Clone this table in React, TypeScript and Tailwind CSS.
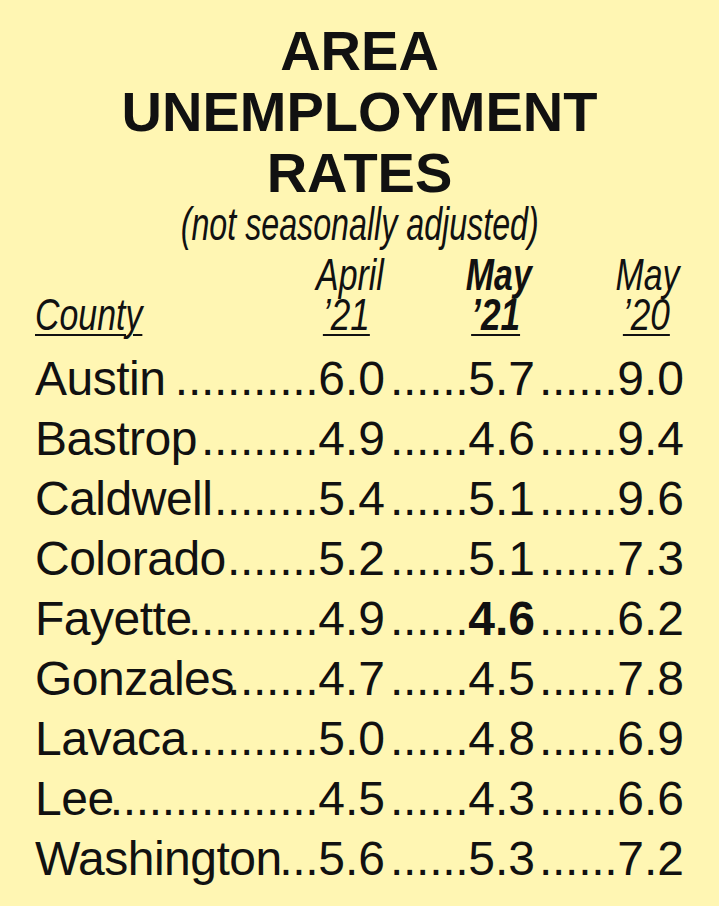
import React from 'react';

type Row = {
  county: string;
  dots: number;
  april21: string;
  may21: string;
  may20: string;
  boldMay21?: boolean;
};

const ROWS: Row[] = [
  { county: 'Austin', dots: 11, april21: '6.0', may21: '5.7', may20: '9.0' },
  { county: 'Bastrop', dots: 9, april21: '4.9', may21: '4.6', may20: '9.4' },
  { county: 'Caldwell', dots: 8, april21: '5.4', may21: '5.1', may20: '9.6' },
  { county: 'Colorado', dots: 7, april21: '5.2', may21: '5.1', may20: '7.3' },
  { county: 'Fayette', dots: 10, april21: '4.9', may21: '4.6', may20: '6.2', boldMay21: true },
  { county: 'Gonzales', dots: 7, april21: '4.7', may21: '4.5', may20: '7.8' },
  { county: 'Lavaca', dots: 10, april21: '5.0', may21: '4.8', may20: '6.9' },
  { county: 'Lee', dots: 16, april21: '4.5', may21: '4.3', may20: '6.6' },
  { county: 'Washington', dots: 3, april21: '5.6', may21: '5.3', may20: '7.2' }
];

// Valor con sus puntos guia, alineado a la derecha de su columna
const Cell: React.FC<{ value: string; bold?: boolean }> = ({ value, bold }) => (
  <div className="text-right whitespace-nowrap">
    <span className="tracking-[-0.3px]">......</span>
    <span className={bold ? 'font-bold' : ''}>{value}</span>
  </div>
);

const App: React.FC = () => {
  return (
    <div className="w-[719px] h-[906px] bg-[#fff6b3] text-[#111] font-['Liberation_Sans',Arial,sans-serif] overflow-hidden">
      {/* Titulo */}
      <h1 className="pt-[20px] text-center font-bold text-[56px] leading-[61px]">
        AREA
        <br />
        UNEMPLOYMENT
        <br />
        RATES
      </h1>

      <div className="-mt-[1px] text-center text-[46px] leading-[44px] italic">
        <span className="inline-block scale-x-[0.7] origin-center whitespace-nowrap">(not seasonally adjusted)</span>
      </div>

      {/* Cabecera de columnas */}
      <div className="mt-[9px] pl-[35px] grid grid-cols-[201px_80px_80px_80px] gap-x-[70px] text-[44px] leading-[40px] italic">
        <div />
        <div className="text-center pr-[6px]">
          <span className="inline-block scale-x-[0.77]">April</span>
        </div>
        <div className="text-center font-bold pr-[6px]">
          <span className="inline-block scale-x-[0.77]">May</span>
        </div>
        <div className="text-center pr-[4px]">
          <span className="inline-block scale-x-[0.77]">May</span>
        </div>

        <div>
          <span className="inline-block scale-x-[0.77] origin-left underline decoration-2 underline-offset-[4px]">County</span>
        </div>
        <div className="text-center">
          <span className="inline-block scale-x-[0.8] underline decoration-2 underline-offset-[4px]">’21</span>
        </div>
        <div className="text-center font-bold">
          <span className="inline-block scale-x-[0.8] underline decoration-2 underline-offset-[4px]">’21</span>
        </div>
        <div className="text-center">
          <span className="inline-block scale-x-[0.8] underline decoration-2 underline-offset-[4px]">’20</span>
        </div>
      </div>

      {/* Filas */}
      <div className="mt-[14px] pl-[35px] text-[48px] leading-[60px]">
        {ROWS.map(r => (
          <div key={r.county} className="grid grid-cols-[350px_150px_149px]">
            <div className="flex justify-between min-w-0">
              <span className="min-w-0 shrink whitespace-nowrap tracking-[-0.5px]">{r.county}</span>
              <span className="shrink-0 whitespace-nowrap">
                <span className="tracking-[-0.3px]">{'.'.repeat(r.dots)}</span>
                {r.april21}
              </span>
            </div>
            <Cell value={r.may21} bold={r.boldMay21} />
            <Cell value={r.may20} />
          </div>
        ))}
      </div>
    </div>
  );
};

export default App;
